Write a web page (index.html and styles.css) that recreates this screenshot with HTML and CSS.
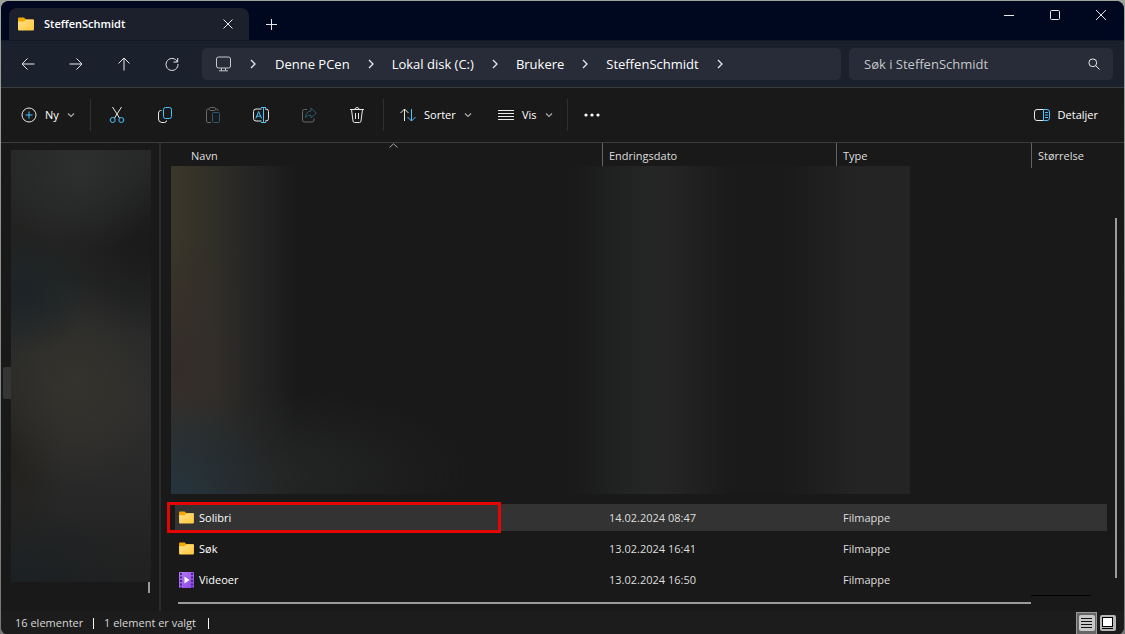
FILE: index.html
```html
<!DOCTYPE html>
<html lang="nb">
<head>
<meta charset="utf-8">
<meta name="viewport" content="width=device-width, initial-scale=1">
<title>SteffenSchmidt</title>
<link rel="stylesheet" href="styles.css">
</head>
<body>
<svg class="defs" width="0" height="0" aria-hidden="true">
  <defs>
    <linearGradient id="gold" x1="0" y1="0" x2="1" y2="1"><stop offset="0" stop-color="#ffe08a"/><stop offset="1" stop-color="#ffc83a"/></linearGradient>
    <linearGradient id="violet" x1="0" y1="0" x2="1" y2="1"><stop offset="0" stop-color="#b57af5"/><stop offset="1" stop-color="#8b45e6"/></linearGradient>
    <symbol id="folder" viewBox="0 0 16 14"><path d="M0 1.500Q0 .5 1 .5H6L8 2.500H15Q16 2.500 16 3.500V6H0Z" fill="#f2a900"/><path d="M0 4.500H6L8 2.500H15Q16 2.500 16 3.500V12.500Q16 13.500 15 13.500H1Q0 13.500 0 12.500Z" fill="url(#gold)"/></symbol>
    <symbol id="chev-right" viewBox="0 0 8 10"><path d="M2 1L6 5L2 9" fill="none" stroke="currentColor" stroke-width="1.300"/></symbol>
    <symbol id="chev-down" viewBox="0 0 8 6"><path d="M1 1.500L4 4.500L7 1.500" fill="none" stroke="currentColor" stroke-width="1.200"/></symbol>
  </defs>
</svg>
<div class="window">
  <header class="titlebar">
    <div class="tab">
      <svg class="tab-folder" width="16" height="14"><use href="#folder"/></svg>
      <span class="tab-title">SteffenSchmidt</span>
      <button class="tab-close" aria-label="Lukk fane"><svg width="10" height="10" class="line"><path d="M.5 .5L9.500 9.500M9.500 .5L.5 9.500"/></svg></button>
    </div>
    <button class="tab-new" aria-label="Ny fane"><svg width="11" height="11" class="line"><path d="M5.500 0V11M0 5.500H11"/></svg></button>
    <div class="controls">
      <button aria-label="Minimer"><svg width="10" height="10" class="line"><path d="M0 5.500H10"/></svg></button>
      <button aria-label="Maksimer"><svg width="10" height="10" class="line"><rect x=".5" y=".5" width="9" height="9" rx="1"/></svg></button>
      <button aria-label="Lukk"><svg width="10" height="10" class="line"><path d="M0 0L10 10M10 0L0 10"/></svg></button>
    </div>
  </header>

  <nav class="navbar">
    <div class="history">
      <button aria-label="Tilbake"><svg width="14" height="14" class="line"><path d="M13.500 7H1M6.500 1.500L1 7L6.500 12.500"/></svg></button>
      <button aria-label="Frem"><svg width="14" height="14" class="line"><path d="M.5 7H13M7.500 1.500L13 7L7.500 12.500"/></svg></button>
      <button aria-label="Opp"><svg width="14" height="14" class="line"><path d="M7 13.500V1M1.500 6.500L7 1L12.500 6.500"/></svg></button>
      <button aria-label="Oppdater"><svg width="14" height="14" class="line"><path d="M12.500 5A6 6 0 1 0 13 7M12.700 1V5H8.500"/></svg></button>
    </div>
    <div class="address">
      <svg width="17" height="16" class="line pc"><rect x="1.500" y="1" width="14" height="11" rx="2"/><path d="M6.500 12V14.500M10.500 12V14.500M4 14.800H13"/></svg>
      <svg class="sep sep-first" width="8" height="10"><use href="#chev-right"/></svg>
      <button class="crumb">Denne PCen</button>
      <svg class="sep" width="8" height="10"><use href="#chev-right"/></svg>
      <button class="crumb">Lokal disk (C:)</button>
      <svg class="sep" width="8" height="10"><use href="#chev-right"/></svg>
      <button class="crumb">Brukere</button>
      <svg class="sep" width="8" height="10"><use href="#chev-right"/></svg>
      <button class="crumb">SteffenSchmidt</button>
      <svg class="sep" width="8" height="10"><use href="#chev-right"/></svg>
    </div>
    <div class="search">
      <input type="text" aria-label="Søk" placeholder="Søk i SteffenSchmidt">
      <svg width="12" height="12" class="line glass"><circle cx="4.800" cy="4.800" r="3.900"/><path d="M7.600 7.600L11.500 11.500"/></svg>
    </div>
  </nav>

  <div class="toolbar">
    <button class="tool tool-new">
      <svg width="16" height="16" class="line"><circle cx="8" cy="8" r="7"/><path class="blue" d="M8 4.500V11.500M4.500 8H11.500"/></svg>
      <span>Ny</span><svg class="drop" width="8" height="6"><use href="#chev-down"/></svg>
    </button>
    <i class="divider"></i>
    <div class="actions">
      <button aria-label="Klipp ut"><svg width="16" height="18" class="line"><path d="M3.500 1L10.500 12M12.500 1L5.500 12"/><g class="blue"><circle cx="3.700" cy="14" r="2.500"/><circle cx="12.300" cy="14" r="2.500"/></g></svg></button>
      <button aria-label="Kopier"><svg width="16" height="18" class="line"><path d="M4.500 4.500H3.500Q1.500 5 1.500 7V13Q1.500 16.500 5 16.500H7.500Q9.500 16.500 9.500 14.500"/><rect class="blue" x="6.500" y="1.500" width="8" height="11" rx="2"/></svg></button>
      <button aria-label="Lim inn" class="disabled"><svg width="16" height="18" class="line"><path d="M4 3H3Q1.500 3 1.500 4.500V15Q1.500 16.500 3 16.500H6M11 3H12Q13 3 13 5"/><rect x="4.500" y="1.500" width="6" height="3" rx="1"/><rect class="blue" x="7.500" y="6.500" width="7" height="10" rx="1"/></svg></button>
      <button aria-label="Gi nytt navn"><svg width="18" height="18" class="line"><path d="M9.500 3H4Q1.500 3 1.500 5.500V12.500Q1.500 15 4 15H9.500M13 3H14Q16.500 3 16.500 5.500V12.500Q16.500 15 14 15H13"/><path class="blue" d="M3.800 12.500L6.700 5.500L9.600 12.500M4.800 10.200H8.600M11.500 1.500V16.500M9 1.500H14M9 16.500H14"/></svg></button>
      <button aria-label="Del" class="disabled"><svg width="16" height="18" class="line"><path d="M6 3.500H3.500Q1.500 3.500 1.500 5.500V14Q1.500 16 3.500 16H11Q13 16 13 14V12.500"/><path class="blue" d="M10 2L15.300 7L10 12V9.200Q6.500 9 4.500 11.500Q5 5.300 10 5Z"/></svg></button>
      <button aria-label="Slett"><svg width="16" height="18" class="line"><path d="M1 3.500H15M6 3.500Q6 1.500 8 1.500T10 3.500M2.500 3.500L4 15Q4.200 16.500 5.500 16.500H10.500Q11.800 16.500 12 15L13.500 3.500M6.500 7V13M9.500 7V13"/></svg></button>
    </div>
    <i class="divider"></i>
    <button class="tool tool-sort">
      <svg width="16" height="14" class="line"><path d="M4.500 13V1M.5 5L4.500 1L8.500 5"/><path class="blue" d="M11.500 1V13M7.500 9L11.500 13L15.500 9"/></svg>
      <span>Sorter</span><svg class="drop" width="8" height="6"><use href="#chev-down"/></svg>
    </button>
    <button class="tool tool-view">
      <svg width="16" height="12" class="line"><path d="M0 1.500H16M0 4.500H16M0 7.500H16M0 10.500H16"/></svg>
      <span>Vis</span><svg class="drop" width="8" height="6"><use href="#chev-down"/></svg>
    </button>
    <i class="divider"></i>
    <button class="more" aria-label="Flere"><svg width="18" height="4" fill="#fff"><circle cx="3" cy="2" r="1.600"/><circle cx="9" cy="2" r="1.600"/><circle cx="15" cy="2" r="1.600"/></svg></button>
    <button class="tool details">
      <svg width="16" height="12" class="line"><path d="M9.500 .5H3Q.5 .5 .5 3V9Q.5 11.500 3 11.500H9.500"/><path class="blue" d="M9.500 .5H13Q15.500 .5 15.500 3V9Q15.500 11.500 13 11.500H9.500ZM11 3.500H14M11 6H14M11 8.500H14"/></svg>
      <span>Detaljer</span>
    </button>
  </div>

  <div class="content">
    <aside class="sidebar">
      <div class="nav-selected"></div>
      <div class="nav-blur"></div>
      <div class="nav-thumb"></div>
    </aside>
    <main class="files">
      <div class="list">
        <table>
          <colgroup><col class="c-name"><col class="c-date"><col class="c-type"><col></colgroup>
          <thead>
            <tr>
              <th class="name">Navn<svg class="sorted" width="9" height="5"><path d="M.5 4.500L4.500 .8L8.500 4.500" fill="none" stroke="#a8a8a8"/></svg></th>
              <th>Endringsdato</th><th>Type</th><th>Størrelse</th>
            </tr>
          </thead>
          <tbody>
            <tr><td class="blurred" colspan="4"><div class="list-blur"></div></td></tr>
            <tr class="selected"><td class="name"><div class="file"><svg width="15" height="13"><use href="#folder"/></svg>Solibri</div><div class="highlight"></div></td><td>14.02.2024 08:47</td><td>Filmappe</td><td></td></tr>
            <tr><td class="name"><div class="file"><svg width="15" height="13"><use href="#folder"/></svg>Søk</div></td><td>13.02.2024 16:41</td><td>Filmappe</td><td></td></tr>
            <tr><td class="name"><div class="file"><svg class="film" width="15" height="16"><rect width="15" height="16" rx="1" fill="url(#violet)"/><path d="M2 1V16M13 1V16" stroke="#51258c" stroke-width="2" stroke-dasharray="2 1.500"/><path d="M5.500 4.500L10.500 8L5.500 11.500Z" fill="#fff"/></svg>Videoer</div></td><td>13.02.2024 16:50</td><td>Filmappe</td><td></td></tr>
          </tbody>
        </table>
      </div>
      <div class="track-v"><div class="thumb-v"></div></div>
      <div class="track-h"><div class="thumb-h"></div><div class="edge"></div></div>
    </main>
  </div>

  <footer class="status">
    <span class="count">16 elementer</span><i class="bar"></i><span class="chosen">1 element er valgt</span><i class="bar"></i>
    <div class="views">
      <button class="view-list" aria-label="Detaljvisning"><svg width="16" height="16"><rect width="16" height="16" rx="2" fill="#c9c9c9"/><path d="M2 3.500H13M2 6.500H13M2 9.500H13M2 12.500H13" stroke="#111"/></svg></button>
      <button class="view-icons" aria-label="Store ikoner"><svg width="16" height="16"><rect width="16" height="16" rx="2" fill="#b5b8b5"/><rect x="2.500" y="2.500" width="10" height="9" fill="#fff" stroke="#000"/><path d="M2 13.500H13" stroke="#000"/></svg></button>
    </div>
  </footer>
</div>
</body>
</html>
```
FILE: styles.css
```css
* { box-sizing: border-box; }

body {
  margin: 0;
  min-height: 100vh;
  display: flex;
  padding: 1px;
  background: linear-gradient(#9ea39c, #8a8e8b 50%, #777);
  color: #fff;
  font: 11px/16px "Open Sans", "Noto Sans", sans-serif;
}

button, input {
  margin: 0;
  padding: 0;
  border: 0;
  background: none;
  color: inherit;
  font: inherit;
}

button { display: flex; align-items: center; justify-content: center; }
svg { display: block; flex: none; }
.defs { position: absolute; }
.line { fill: none; stroke: #e8e8e8; overflow: visible; }
.blue { stroke: #4cc2ff; }

.window {
  flex: 1;
  min-width: 0;
  display: flex;
  flex-direction: column;
  overflow: hidden;
  border-radius: 8px;
  background: #191919;
}

.titlebar {
  display: flex;
  height: 40px;
  padding-left: 8px;
  background: #000820;
  border-bottom: 1px solid #121a29;
}
.tab {
  display: flex;
  align-items: center;
  width: 240px;
  margin-top: 7px;
  padding: 0 16px 0 9px;
  border-radius: 8px 8px 0 0;
  background: #1b202c;
}
.tab-title { flex: 1; margin-left: 10px; font-weight: 600; }
.tab-new { width: 40px; margin: 7px 0 0 2px; }
.controls { display: flex; margin-left: auto; }
.controls button { width: 46px; height: 28px; }

.navbar {
  display: flex;
  align-items: center;
  gap: 8px;
  height: 47px;
  padding-right: 11px;
  background: #1b202d;
  border-bottom: 1px solid #3b3b3d;
  font-size: 13px;
}
.history { display: flex; width: 193px; padding-left: 3px; }
.history button { flex: none; width: 48px; height: 32px; }
.address, .search {
  display: flex;
  align-items: center;
  height: 32px;
  border-radius: 5px;
  background: #272c38;
}
.address { flex: 1; padding-left: 13px; }
.sep { margin: 0 17px; color: #e8e8e8; }
.sep-first { margin-right: 18px; }
.pc { stroke: #c8c8c8; }
.search { width: 264px; padding: 0 13px 0 15px; }
.search input { flex: 1; min-width: 0; outline: 0; }
.search input::placeholder { color: #c5c7ca; opacity: 1; }

.toolbar {
  display: flex;
  align-items: center;
  height: 55px;
  padding: 0 11px;
  border-bottom: 1px solid #3b3b3b;
}
.divider { width: 1px; height: 32px; background: #303030; }
.tool { height: 32px; justify-content: flex-start; gap: 8px; }
.drop { margin-left: auto; color: #aaa; }
.tool-new { width: 70px; padding: 0 9px; margin-right: 8px; }
.actions { display: flex; gap: 8px; padding: 0 6px; }
.actions button { width: 40px; height: 32px; }
.disabled { opacity: .38; }
.tool-sort { width: 86px; margin: 0 12px 0 8px; padding: 0 10px 0 8px; }
.tool-view { width: 69px; margin-right: 8px; padding: 0 10px 0 8px; }
.more { width: 40px; height: 32px; margin-left: 4px; }
.details { margin-left: auto; padding: 0 15px; }

.content { flex: 1; display: flex; }
.sidebar {
  position: relative;
  width: 160px;
  padding: 7px 8px 16px 10px;
  border-right: 2px solid #2b2b2b;
}
.nav-selected {
  position: absolute;
  top: 224px;
  left: 2px;
  width: 10px;
  height: 32px;
  border-radius: 2px 0 0 2px;
  background: #353535;
}
.nav-blur {
  position: relative;
  height: 432px;
  background:
    radial-gradient(ellipse 60% 20% at 50% 4%, #2d2f2f, transparent),
    radial-gradient(ellipse 70% 22% at 100% 22%, #1a1a1a, transparent),
    radial-gradient(ellipse 50% 14% at 8% 33%, #1d2427, transparent),
    radial-gradient(ellipse 70% 24% at 46% 54%, #35332d, transparent),
    radial-gradient(ellipse 40% 24% at 0% 70%, #22211d, transparent),
    radial-gradient(ellipse 80% 18% at 10% 100%, #1c2123, transparent),
    linear-gradient(#262828, #222221 20%, #262828 38%, #2c2c2c 60%, #292929 76%, #202020);
}
.nav-thumb { width: 2px; height: 11px; margin-left: 137px; background: #9b9b9b; }

.files {
  flex: 1;
  min-width: 0;
  display: grid;
  grid-template-columns: 1fr 17px;
  grid-template-rows: 1fr 16px;
}
.list { padding-left: 10px; min-width: 0; }
table { width: 100%; table-layout: fixed; border-collapse: separate; border-spacing: 0; }
.c-name { width: 431px; }
.c-date { width: 234px; }
.c-type { width: 195px; }
th {
  position: relative;
  height: 25px;
  padding: 0 0 0 6px;
  border-left: 1px solid #636363;
  color: #dedede;
  font-weight: 400;
  text-align: left;
}
th.name { padding-left: 20px; border-left: 0; }
.sorted { position: absolute; top: 0; left: 218px; }
td {
  height: 31px;
  padding: 0 0 0 7px;
  border: solid transparent;
  border-width: 2px 0;
  background-clip: padding-box;
  color: #dedede;
}
td.blurred { height: 334px; padding: 0; border: 0; vertical-align: top; }
.list-blur {
  position: relative;
  width: 79%;
  height: 328px;
  margin-top: -2px;
  background:
    radial-gradient(ellipse 15% 32% at 0% 100%, #25343d, transparent),
    radial-gradient(ellipse 28% 26% at 12% 94%, #252626, transparent),
    radial-gradient(ellipse 9% 40% at 1% 62%, #332c29, transparent),
    linear-gradient(90deg, transparent 54%, #242626 64%, #252525 67%, #1a1a1a 76%, #1a1a1a 83%, #242424 93%, #242424),
    linear-gradient(90deg, #3a3629, #302e28 6%, #252525 11%, #191919 17%, #191919 55%);
}
td.name { position: relative; padding-left: 4px; border-left: 4px solid transparent; color: #fff; }
.selected td { background-color: #333; }
.file { display: flex; align-items: center; gap: 5px; }
.highlight {
  position: absolute;
  top: -2px;
  left: -8px;
  width: 334px;
  height: 31px;
  border: 3px solid #e60505;
}
.track-v { padding: 75px 0 17px 8px; }
.thumb-v { width: 2px; height: 100%; background: #9b9b9b; }
.track-h { display: flex; padding-left: 17px; }
.thumb-h { flex: 0 1 853px; height: 2px; margin-top: 7px; background: #9b9b9b; }
.edge { width: 60px; height: 1px; background: #000; }

.status {
  display: flex;
  align-items: center;
  height: 24px;
  padding: 0 8px 0 14px;
  background: #1c1c1c;
  color: #d8d8d8;
}
.count { min-width: 78px; }
.chosen { min-width: 114px; padding-left: 10px; }
.bar { width: 1px; height: 11px; background: #fff; }
.views { display: flex; align-items: center; gap: 3px; margin-left: auto; }
.view-list { width: 21px; height: 23px; border: 1px solid #999; background: #666; }
```
